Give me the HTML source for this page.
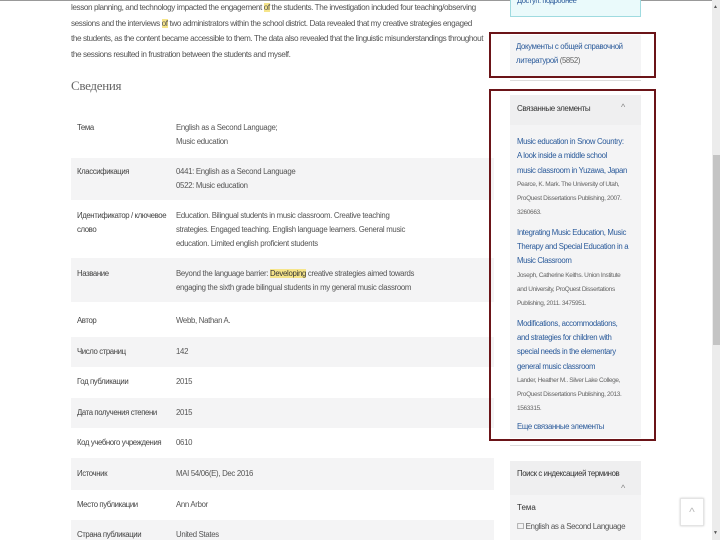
<!DOCTYPE html>
<html><head><meta charset="utf-8"><style>
body{margin:0;width:720px;height:540px;overflow:hidden;background:#fff;font-family:"Liberation Sans","DejaVu Sans",sans-serif;color:#555;position:relative;font-size:8px}
.abs{position:absolute}
.l{color:#2a5a9a}
.hl{background:#f6e58a}
.p{left:71px;top:0;width:425px;line-height:15.5px;font-size:8.2px;color:#555;letter-spacing:-.42px;white-space:nowrap}
.row{position:absolute;left:71px;width:423px}
.row.g{background:#f4f4f5}
.k{position:absolute;left:6px;font-size:7.8px;color:#444;line-height:14px;letter-spacing:-.4px;white-space:nowrap}
.v{position:absolute;left:105px;font-size:7.8px;color:#555;line-height:14px;letter-spacing:-.3px;white-space:nowrap}
.side{background:#f4f4f5;left:510px;width:131px}
.st{font-size:7.8px;line-height:14.3px;letter-spacing:-.35px;white-space:nowrap}
.sm{font-size:6.5px;color:#666;line-height:14px;letter-spacing:-.35px;white-space:nowrap}
</style></head><body>
<div class="abs" style="left:0;top:0;width:720px;height:1px;background:#999"></div>
<div class="abs p">lesson planning, and technology impacted the engagement <span class="hl">of</span> the students. The investigation included four teaching/observing<br>sessions and the interviews <span class="hl">of</span> two administrators within the school district. Data revealed that my creative strategies engaged<br>the students, as the content became accessible to them. The data also revealed that the linguistic misunderstandings throughout<br>the sessions resulted in frustration between the students and myself.</div>
<div class="abs" style="left:71px;top:78px;font-family:'Liberation Serif',serif;font-size:13px;color:#666;letter-spacing:-.3px">Сведения</div>

<div class="row" style="top:115px;height:43px"><div class="k" style="top:6px">Тема</div><div class="v l" style="top:6px">English as a Second Language;<br>Music education</div></div>
<div class="row g" style="top:158px;height:42px"><div class="k" style="top:7px">Классификация</div><div class="v l" style="top:7px">0441: English as a Second Language<br>0522: Music education</div></div>
<div class="row" style="top:200px;height:58px"><div class="k" style="top:9px">Идентификатор / ключевое<br>слово</div><div class="v l" style="top:9px">Education. Bilingual students in music classroom. Creative teaching<br>strategies. Engaged teaching. English language learners. General music<br>education. Limited english proficient students</div></div>
<div class="row g" style="top:258px;height:44px"><div class="k" style="top:9px">Название</div><div class="v" style="top:9px">Beyond the language barrier: <span class="hl" style="color:#333">Developing</span> creative strategies aimed towards<br>engaging the sixth grade bilingual students in my general music classroom</div></div>
<div class="row" style="top:302px;height:35px"><div class="k" style="top:12px">Автор</div><div class="v l" style="top:12px">Webb, Nathan A.</div></div>
<div class="row g" style="top:337px;height:30px"><div class="k" style="top:8px">Число страниц</div><div class="v" style="top:8px">142</div></div>
<div class="row" style="top:367px;height:31px"><div class="k" style="top:8px">Год публикации</div><div class="v" style="top:8px">2015</div></div>
<div class="row g" style="top:398px;height:30px"><div class="k" style="top:8px">Дата получения степени</div><div class="v" style="top:8px">2015</div></div>
<div class="row" style="top:428px;height:30px"><div class="k" style="top:8px">Код учебного учреждения</div><div class="v" style="top:8px">0610</div></div>
<div class="row g" style="top:458px;height:32px"><div class="k" style="top:9px">Источник</div><div class="v" style="top:9px">MAI 54/06(E), Dec 2016</div></div>
<div class="row" style="top:490px;height:30px"><div class="k" style="top:8px">Место публикации</div><div class="v" style="top:8px">Ann Arbor</div></div>
<div class="row g" style="top:520px;height:20px"><div class="k" style="top:8px">Страна публикации</div><div class="v" style="top:8px">United States</div></div>

<div class="abs" style="left:510px;top:-2px;width:129px;height:18px;background:#eafafb;border:1px solid #9fdbe0;border-top:none"><div style="position:absolute;left:6px;top:-2px;font-size:7.5px;color:#2a5a9a;letter-spacing:-.4px">Доступ: подробнее</div></div>
<div class="abs side" style="top:35px;height:42px"><div class="st" style="padding:5px 6px;color:#2a5a9a">Документы с общей справочной<br>литературой <span style="color:#666">(5852)</span></div></div>
<div class="abs" style="left:510px;top:80px;width:131px;height:1px;background:#ddd"></div>
<div class="abs side" style="top:95px;height:343px">
<div style="height:30px;background:#efeff0;position:relative"><div style="position:absolute;left:7px;top:9px;font-size:8px;color:#333;letter-spacing:-.4px">Связанные элементы</div><div style="position:absolute;left:111px;top:7px;font-size:9px;color:#888">^</div></div>
<div style="padding:10px 7px 0">
<div class="st l">Music education in Snow Country:<br>A look inside a middle school<br>music classroom in Yuzawa, Japan</div>
<div class="sm">Pearce, K. Mark. The University of Utah,<br>ProQuest Dissertations Publishing, 2007.<br>3260663.</div>
<div class="st l" style="margin-top:6px">Integrating Music Education, Music<br>Therapy and Special Education in a<br>Music Classroom</div>
<div class="sm">Joseph, Catherine Keiths. Union Institute<br>and University, ProQuest Dissertations<br>Publishing, 2011. 3475951.</div>
<div class="st l" style="margin-top:6px">Modifications, accommodations,<br>and strategies for children with<br>special needs in the elementary<br>general music classroom</div>
<div class="sm">Lander, Heather M.. Silver Lake College,<br>ProQuest Dissertations Publishing, 2013.<br>1563315.</div>
<div class="st l" style="margin-top:4px">Еще связанные элементы</div>
</div></div>
<div class="abs" style="left:510px;top:445px;width:131px;height:1px;background:#ddd"></div>
<div class="abs side" style="top:461px;height:79px">
<div style="background:#efeff0;height:34px;position:relative"><div style="position:absolute;left:7px;top:8px;font-size:7.8px;color:#333;letter-spacing:-.4px">Поиск с индексацией терминов</div><div style="position:absolute;left:111px;top:22px;font-size:9px;color:#888">^</div></div>
<div style="position:absolute;left:7px;top:42px;font-size:8px;color:#333">Тема</div>
<div style="position:absolute;left:7px;top:61px;font-size:8px;color:#555;letter-spacing:-.4px">☐ English as a Second Language</div>
</div>
<div class="abs" style="left:489px;top:32px;width:163px;height:42px;border:2px solid #6b1418"></div>
<div class="abs" style="left:489px;top:89px;width:163px;height:348px;border:2px solid #6b1418"></div>
<div class="abs" style="left:680px;top:498px;width:22px;height:26px;background:#fff;border:1px solid #e4e4e4;box-shadow:0 0 2px #ccc;color:#bbb;font-size:12px;text-align:center;line-height:26px">^</div>
<div class="abs" style="left:712px;top:0;width:8px;height:540px;background:#ececec"></div>
<div class="abs" style="left:713px;top:155px;width:7px;height:190px;background:#c4c4c4"></div>
<div class="abs" style="left:713px;top:4px;font-size:5px;color:#555">▲</div>
<div class="abs" style="left:713px;top:530px;font-size:5px;color:#555">▼</div>
</body></html>
